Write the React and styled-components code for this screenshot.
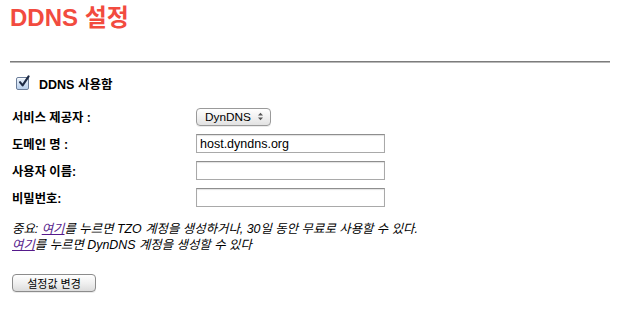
import styled, { createGlobalStyle } from "styled-components";

const GlobalStyle = createGlobalStyle`
  html, body {
    margin: 0;
    padding: 0;
    background: #ffffff;
  }
  body {
    font-family: "Liberation Sans", Arial, "Noto Sans CJK KR", sans-serif;
    color: #000;
  }
`;

const fields = [
  { label: "서비스 제공자 :", kind: "select", value: "DynDNS" },
  { label: "도메인 명 :", kind: "text", value: "host.dyndns.org" },
  { label: "사용자 이름:", kind: "text", value: "" },
  { label: "비밀번호:", kind: "password", value: "" },
];

const App = () => {
  return (
    <>
      <GlobalStyle />
      <Page>
        <Title>DDNS 설정</Title>
        <Divider />
        <CheckRow>
          <CheckBox>
            <svg width="14" height="14" viewBox="0 0 14 14">
              <path
                d="M3 7.2 L5.6 10.4 L11.6 1.4"
                fill="none"
                stroke="#1d2a44"
                strokeWidth="2.1"
                strokeLinecap="round"
                strokeLinejoin="round"
              />
            </svg>
          </CheckBox>
          <CheckLabel>DDNS 사용함</CheckLabel>
        </CheckRow>

        <Form>
          {fields.map((f) => (
            <Row key={f.label}>
              <Label>{f.label}</Label>
              {f.kind === "select" ? (
                <Select>
                  <span>{f.value}</span>
                  <svg width="7" height="9" viewBox="0 0 7 9">
                    <path d="M1 3.4 L3.5 0.8 L6 3.4 Z" fill="#555" />
                    <path d="M1 5.6 L3.5 8.2 L6 5.6 Z" fill="#555" />
                  </svg>
                </Select>
              ) : (
                <TextInput
                  type={f.kind}
                  defaultValue={f.value}
                  readOnly
                />
              )}
            </Row>
          ))}
        </Form>

        <Notes>
          <p>
            중요: <NoteLink href="#">여기</NoteLink>를 누르면 TZO 계정을 생성하거나,
            30일 동안 무료로 사용할 수 있다.
          </p>
          <p>
            <NoteLink href="#">여기</NoteLink>를 누르면 DynDNS 계정을 생성할 수 있다
          </p>
        </Notes>

        <SaveButton type="button">설정값 변경</SaveButton>
      </Page>
    </>
  );
};

//styled components
const Page = styled.div`
  width: 621px;
  height: 319px;
  padding: 0 11px 0 10px;
  box-sizing: border-box;
  overflow: hidden;
`;

const Title = styled.h1`
  margin: 0;
  padding-top: 4px;
  font-size: 24px;
  line-height: 28px;
  font-weight: bold;
  color: #f24b3f;
`;

const Divider = styled.div`
  margin-top: 29px;
  height: 0;
  border-top: 1px solid #7c7c7c;
  border-bottom: 1px solid #b8b8b8;
`;

const CheckRow = styled.div`
  display: flex;
  align-items: center;
  gap: 10px;
  margin-top: 12px;
  padding-left: 6px;
  height: 16px;
`;

const CheckBox = styled.span`
  position: relative;
  width: 11px;
  height: 11px;
  border: 1px solid #6b7d99;
  border-radius: 2px;
  background: linear-gradient(#eaf2fb, #b9d0ec);
  box-shadow: inset 0 1px 1px rgba(255, 255, 255, 0.8);
  svg {
    position: absolute;
    left: 0px;
    top: -3px;
  }
`;

const CheckLabel = styled.span`
  font-size: 12.5px;
  font-weight: bold;
`;

const Form = styled.div`
  display: flex;
  flex-direction: column;
  margin-top: 12px;
  padding-left: 2px;
`;

const Row = styled.div`
  display: grid;
  grid-template-columns: 184px auto;
  align-items: center;
  height: 27px;
`;

const Label = styled.span`
  font-size: 12.3px;
  font-weight: bold;
`;

const Select = styled.div`
  display: flex;
  align-items: center;
  justify-content: space-between;
  box-sizing: border-box;
  width: 75px;
  height: 18px;
  padding: 0 6px 0 8px;
  border: 1px solid #9a9a9a;
  border-radius: 4px;
  background: linear-gradient(#ffffff, #f1f1f1 50%, #e2e2e2);
  font-size: 11.8px;
  box-shadow: 0 1px 0 rgba(0, 0, 0, 0.08);
`;

const TextInput = styled.input`
  box-sizing: border-box;
  width: 189px;
  height: 19px;
  margin: 0;
  padding: 0 3px;
  border: 1px solid #a9a9a9;
  border-top-color: #8e8e8e;
  box-shadow: inset 0 1px 1px rgba(0, 0, 0, 0.12);
  font-family: "Liberation Sans", Arial, sans-serif;
  font-size: 12.5px;
  color: #000;
  outline: none;
`;

const Notes = styled.div`
  margin-top: 10px;
  padding-left: 2px;
  font-size: 12.4px;
  font-style: italic;
  line-height: 16px;
  p {
    margin: 0;
  }
`;

const NoteLink = styled.a`
  color: #551a8b;
  text-decoration: underline;
`;

const SaveButton = styled.button`
  display: block;
  margin: 21px 0 0 2px;
  width: 84px;
  height: 18px;
  padding: 0;
  border: 1px solid #8c8c8c;
  border-radius: 4px;
  background: linear-gradient(#ffffff, #f0f0f0 50%, #dcdcdc);
  font-family: "Liberation Sans", Arial, "Noto Sans CJK KR", sans-serif;
  font-size: 11px;
  color: #000;
  box-shadow: 0 1px 0 rgba(0, 0, 0, 0.08);
`;

export default App;
